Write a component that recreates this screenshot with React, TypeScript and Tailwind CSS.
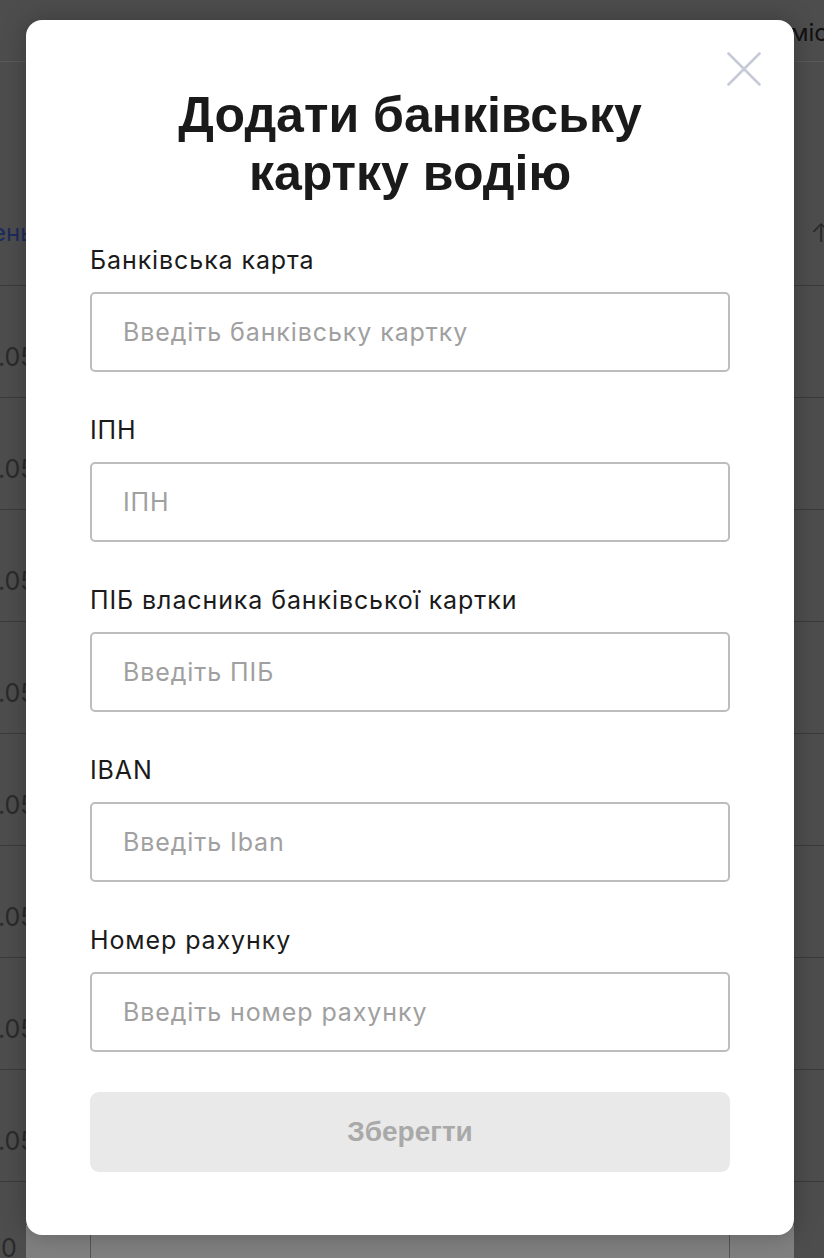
import React from "react";

const fields = [
  { label: "Банківська карта", placeholder: "Введіть банківську картку" },
  { label: "ІПН", placeholder: "ІПН" },
  { label: "ПІБ власника банківської картки", placeholder: "Введіть ПІБ" },
  { label: "IBAN", placeholder: "Введіть Iban" },
  { label: "Номер рахунку", placeholder: "Введіть номер рахунку" },
];

const rows = [0, 1, 2, 3, 4, 5, 6, 7];

function CloseIcon() {
  return (
    <svg width="34" height="34" viewBox="0 0 34 34" fill="none">
      <path
        d="M1.5 1.5L32.5 32.5M32.5 1.5L1.5 32.5"
        stroke="#c7cbd7"
        strokeWidth="2.6"
        strokeLinecap="round"
      />
    </svg>
  );
}

export default function App() {
  return (
    <div className="relative h-[1258px] w-[824px] overflow-hidden bg-[#4d4d4d] font-['Inter','Noto_Sans',sans-serif]">
      {/* dimmed page behind the dialog */}
      <div className="flex flex-col">
        <div className="flex h-[62px] items-start justify-end border-b border-[#5a5a5a] pt-[19px]">
          <span className="mr-[-4px] text-[24px] leading-[28px] text-[#111]">міс</span>
        </div>
        <div className="flex h-[224px] items-end justify-between border-b border-[#3b3b3b] pb-[38px]">
          <span className="ml-[-8px] text-[24px] leading-[28px] text-[#1c2b5e]">ень</span>
          <span className="mr-[-8px] text-[26px] font-light leading-[28px] text-[#262626]">↑</span>
        </div>
        {rows.map((r) => (
          <div
            key={r}
            className="flex h-[112px] items-start border-b border-[#3b3b3b] pt-[57px]"
          >
            <span className="ml-[-2px] text-[25px] leading-[28px] text-[#2a2a2a]">.05</span>
          </div>
        ))}
        <div className="flex h-[80px] items-start pt-[52px]">
          <span className="ml-[1px] text-[25px] leading-[28px] text-[#2a2a2a]">0</span>
        </div>
      </div>

      <div className="absolute left-[26px] top-[1225px] flex h-[40px] w-[768px] bg-[#808080]">
        <div className="ml-[64px] h-full w-[640px] border-x border-[#555]" />
      </div>

      {/* dialog */}
      <div className="absolute left-[26px] top-[20px] h-[1215px] w-[768px] rounded-[16px] bg-white px-16 pt-[66px] shadow-[0_0_24px_rgba(0,0,0,0.25)]">
        <button className="absolute right-[33px] top-[32px]">
          <CloseIcon />
        </button>

        <h2 className="text-center font-['Liberation_Sans',Arial,sans-serif] text-[50px] font-bold leading-[58px] text-[#1a1a1a]">
          Додати банківську
          <br />
          картку водію
        </h2>

        <form className="mt-[42px] flex flex-col gap-[42px]">
          {fields.map((f) => (
            <div key={f.label} className="flex flex-col gap-4">
              <label className="text-[25px] leading-[32px] tracking-[0.9px] text-[#1a1a1a]">
                {f.label}
              </label>
              <input
                placeholder={f.placeholder}
                className="h-[80px] w-full rounded-[5px] border-2 border-[#bdbdbd] px-[31px] text-[25px] tracking-[0.9px] outline-none placeholder:text-[#a0a0a0]"
              />
            </div>
          ))}
        </form>

        <button
          disabled
          className="mt-[40px] h-[80px] w-full rounded-[9px] bg-[#e9e9e9] font-['Liberation_Sans',Arial,sans-serif] text-[28px] font-bold text-[#a9a9a9]"
        >
          Зберегти
        </button>
      </div>
    </div>
  );
}
